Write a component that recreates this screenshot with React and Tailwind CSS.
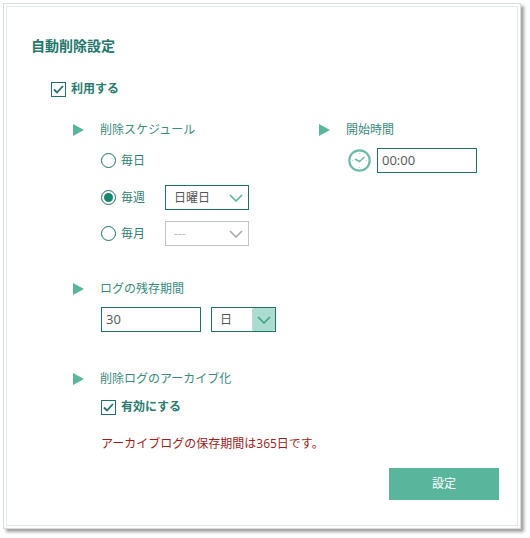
import { useState } from "react";

const font = { fontFamily: '"Open Sans", "Noto Sans CJK JP", sans-serif' };

function Triangle() {
  return (
    <svg width="11" height="12" viewBox="0 0 11 12" className="shrink-0">
      <path d="M0 0 L11 6 L0 12 Z" fill="#5ab59d" />
    </svg>
  );
}

function Chevron({ color = "#5ab59d" }) {
  return (
    <svg width="14" height="8" viewBox="0 0 14 8" fill="none">
      <path d="M1 1 L7 7 L13 1" stroke={color} strokeWidth="1.6" />
    </svg>
  );
}

function Heading({ children }) {
  return (
    <div className="flex h-[18px] items-center">
      <Triangle />
      <span className="ml-[16px] text-xs text-[#3b8a7e]">{children}</span>
    </div>
  );
}

function Check({ label }) {
  return (
    <div className="flex items-center">
      <div className="flex h-[15px] w-[15px] items-center justify-center border border-[#1f7168]">
        <svg width="11" height="9" viewBox="0 0 11 9" fill="none">
          <path d="M1 4.5 L4 7.5 L10 1" stroke="#1f7168" strokeWidth="1.8" />
        </svg>
      </div>
      <span className="ml-[5px] text-xs font-bold text-[#2a7a70]">{label}</span>
    </div>
  );
}

function Radio({ on, label }) {
  return (
    <div className="flex w-[64px] items-center">
      <div className="flex h-[15px] w-[15px] items-center justify-center rounded-full border border-[#1f7168]">
        {on && <div className="h-[9px] w-[9px] rounded-full bg-[#16876f]" />}
      </div>
      <span className="ml-[5px] text-xs text-[#2f7f73]">{label}</span>
    </div>
  );
}

function Clock() {
  return (
    <svg width="23" height="23" viewBox="0 0 23 23" fill="none" className="shrink-0">
      <circle cx="11.5" cy="11.5" r="10.2" stroke="#6dbba7" strokeWidth="2.2" />
      <path d="M7 10 L11.5 12.5 L16.5 8" stroke="#6dbba7" strokeWidth="1.6" />
      <path d="M11.5 4 V5 M11.5 18 V19 M4 11.5 H5 M18 11.5 H19" stroke="#a9d8cb" strokeWidth="1" />
    </svg>
  );
}

export default function App() {
  const [title] = useState("自動削除設定");

  return (
    <div className="h-[538px] w-[530px] bg-white p-[3px]" style={font}>
      <div className="h-[526px] w-[518px] border border-[#dcdcdc] p-[2px] shadow-[3px_3px_3px_#a0a0a0]">
        <div className="h-full w-full border border-[#dcecea] pl-[24px] pt-[29px]">
          <h1 className="text-sm font-bold leading-[20px] text-[#23766c]">{title}</h1>

          <div className="ml-[20px] mt-[25px]">
            <Check label="利用する" />
          </div>

          <div className="ml-[42px] mt-[24px] flex">
            <div className="w-[246px]">
              <Heading>削除スケジュール</Heading>
              <div className="ml-[28px] mt-[14px] flex h-[15px] items-center">
                <Radio label="毎日" />
              </div>
              <div className="ml-[28px] mt-[17px] flex h-[25px] items-center">
                <Radio on label="毎週" />
                <div className="flex h-[25px] w-[84px] items-center justify-between border border-[#1f7168] pl-[8px] pr-[5px] text-xs text-[#555]">
                  日曜日
                  <Chevron />
                </div>
              </div>
              <div className="ml-[28px] mt-[11px] flex h-[25px] items-center">
                <Radio label="毎月" />
                <div className="flex h-[25px] w-[84px] items-center justify-between border border-[#c4c4c4] pl-[8px] pr-[5px] text-xs text-[#bbb]">
                  ---
                  <Chevron color="#aaa" />
                </div>
              </div>
            </div>
            <div>
              <Heading>開始時間</Heading>
              <div className="ml-[29px] mt-[9px] flex items-center gap-[6px]">
                <Clock />
                <div className="flex h-[25px] w-[100px] items-center border border-[#1f7168] pl-[4px] text-[13px] text-[#555]">
                  00:00
                </div>
              </div>
            </div>
          </div>

          <div className="ml-[42px] mt-[34px]">
            <Heading>ログの残存期間</Heading>
            <div className="ml-[28px] mt-[9px] flex gap-[10px]">
              <div className="flex h-[25px] w-[100px] items-center border border-[#1f7168] pl-[4px] text-[13px] text-[#555]">
                30
              </div>
              <div className="flex h-[25px] w-[65px] items-center justify-between border border-[#1f7168] pl-[8px] text-xs text-[#555]">
                日
                <div className="flex h-[23px] w-[23px] items-center justify-center rounded-[2px] bg-[#acdccf]">
                  <Chevron color="#3f9f8b" />
                </div>
              </div>
            </div>
          </div>

          <div className="ml-[42px] mt-[38px]">
            <Heading>削除ログのアーカイブ化</Heading>
            <div className="ml-[28px] mt-[11px]">
              <Check label="有効にする" />
            </div>
            <p className="ml-[28px] mt-[21px] text-xs text-[#a01c1c]">アーカイブログの保存期間は365日です。</p>
          </div>

          <div className="mr-[18px] mt-[16px] flex justify-end">
            <button className="h-[32px] w-[110px] bg-[#5ab59d] text-xs text-white">設定</button>
          </div>
        </div>
      </div>
    </div>
  );
}
